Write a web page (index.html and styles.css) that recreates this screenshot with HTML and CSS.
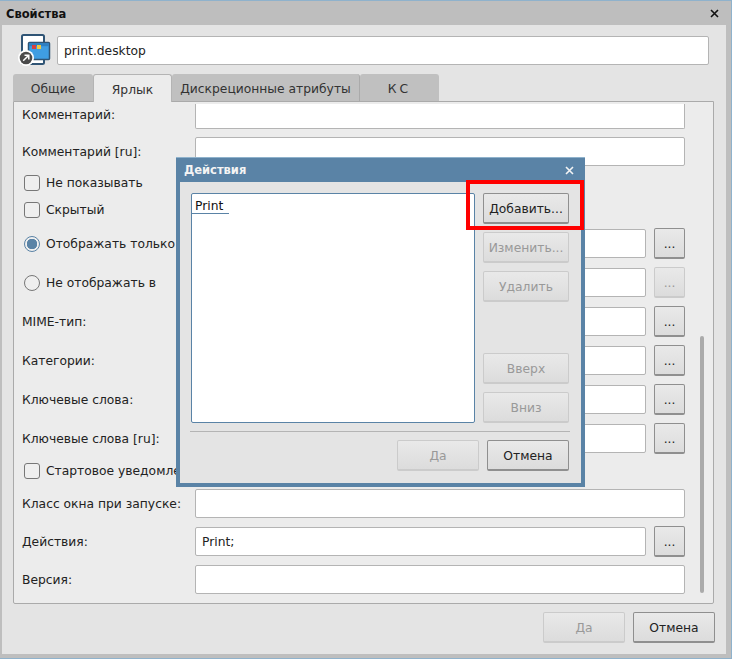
FILE: index.html
```html
<!DOCTYPE html>
<html lang="ru">
<head>
<meta charset="utf-8">
<title>Свойства</title>
<link rel="stylesheet" href="styles.css">
</head>
<body>
<div class="window">
  <header class="titlebar">
    <span class="title">Свойства</span>
    <svg class="close" width="9" height="9" viewBox="0 0 9 9"><path d="M1 1l7 7M8 1L1 8" stroke="currentColor" stroke-width="1.6" fill="none"/></svg>
  </header>
  <div class="client">
    <div class="name-row">
      <svg class="file-icon" width="33" height="33" viewBox="0 0 33 33">
        <rect x="4" y="1" width="22" height="29" rx="1.500" fill="#fff" stroke="#2f5475" stroke-width="2"/>
        <rect x="10.500" y="8.500" width="21" height="17" rx="1" fill="#3f9de2" stroke="#2f5475" stroke-width="1.500"/>
        <rect x="11.200" y="9.200" width="19.600" height="3" fill="#2f7fc0"/>
        <rect x="14" y="11" width="4" height="4" fill="#d8413f"/>
        <rect x="19" y="11" width="4" height="4" fill="#f3c83a"/>
        <circle cx="8" cy="24" r="8" fill="#fff"/>
        <circle cx="8" cy="24" r="6.300" fill="#4a4a4a"/>
        <path d="M5.200 26.800L10.500 21.500M6.500 21.200H10.800V25.500" stroke="#fff" stroke-width="1.500" fill="none"/>
      </svg>
      <div class="input name-input">print.desktop</div>
    </div>
    <nav class="tabs">
      <span class="tab tab-first">Общие</span>
      <span class="tab tab-active">Ярлык</span>
      <span class="tab tab-wide">Дискреционные атрибуты</span>
      <span class="tab tab-last">КС</span>
    </nav>
    <section class="panel">
      <div class="form">
        <div class="row row-first"><label class="label">Комментарий:</label><div class="input input-clipped"></div></div>
        <div class="row row-input"><label class="label">Комментарий [ru]:</label><div class="input"></div></div>
        <div class="row row-check"><span class="checkbox"></span><span class="opt">Не показывать</span></div>
        <div class="row row-check row-loose"><span class="checkbox"></span><span class="opt">Скрытый</span></div>
        <div class="row row-btn row-loose"><span class="radio radio-on"></span><span class="opt opt-field">Отображать только</span><div class="input"></div><button class="btn btn-dots">...</button></div>
        <div class="row row-btn"><span class="radio"></span><span class="opt opt-field">Не отображать в</span><div class="input"></div><button class="btn btn-dots btn-off">...</button></div>
        <div class="row row-btn"><label class="label">MIME-тип:</label><div class="input"></div><button class="btn btn-dots">...</button></div>
        <div class="row row-btn"><label class="label">Категории:</label><div class="input"></div><button class="btn btn-dots">...</button></div>
        <div class="row row-btn"><label class="label">Ключевые слова:</label><div class="input"></div><button class="btn btn-dots">...</button></div>
        <div class="row row-btn"><label class="label">Ключевые слова [ru]:</label><div class="input"></div><button class="btn btn-dots">...</button></div>
        <div class="row row-check"><span class="checkbox"></span><span class="opt">Стартовое уведомление</span></div>
        <div class="row row-input row-loose"><label class="label">Класс окна при запуске:</label><div class="input"></div></div>
        <div class="row row-btn"><label class="label">Действия:</label><div class="input">Print;</div><button class="btn btn-dots">...</button></div>
        <div class="row row-input"><label class="label">Версия:</label><div class="input"></div></div>
      </div>
      <div class="scrollbar"></div>
    </section>
    <footer class="actions">
      <button class="btn btn-main btn-off">Да</button>
      <button class="btn btn-main">Отмена</button>
    </footer>
  </div>

  <div class="dialog">
    <header class="dialog-title">
      <span class="title">Действия</span>
      <svg class="close" width="9" height="9" viewBox="0 0 9 9"><path d="M1 1l7 7M8 1L1 8" stroke="currentColor" stroke-width="1.600" fill="none"/></svg>
    </header>
    <div class="dialog-client">
      <div class="dialog-main">
        <div class="list"><span class="list-item">Print</span></div>
        <div class="side">
          <button class="btn btn-side">Добавить...</button>
          <button class="btn btn-side btn-off">Изменить...</button>
          <button class="btn btn-side btn-off">Удалить</button>
          <span class="side-spacer"></span>
          <button class="btn btn-side btn-off">Вверх</button>
          <button class="btn btn-side btn-off">Вниз</button>
        </div>
      </div>
      <div class="dialog-actions">
        <button class="btn btn-main btn-off">Да</button>
        <button class="btn btn-main">Отмена</button>
      </div>
    </div>
  </div>
  <div class="highlight"></div>
</div>
</body>
</html>
```
FILE: styles.css
```css
* { box-sizing: border-box; }
html, body { margin: 0; padding: 0; }
body {
  width: 732px;
  height: 659px;
  overflow: hidden;
  font-family: "DejaVu Sans", sans-serif;
  font-size: 12.3px;
  color: #222;
}
.window {
  position: relative;
  width: 732px;
  height: 659px;
  background: #bebebe;
  border-top: 1px solid #8fb2cc;
  border-right: 1px solid #8fb2cc;
  border-bottom: 1px solid #8fb2cc;
  display: flex;
  flex-direction: column;
}
.titlebar {
  height: 24px;
  flex: none;
  display: flex;
  align-items: center;
  justify-content: space-between;
  padding: 0 12px 0 6px;
  color: #111;
}
.titlebar .title { margin-top: 2px; }
.title {
  font-family: "DejaVu Sans", sans-serif;
  font-weight: 700;
  font-size: 11.5px;
}
.client {
  flex: 1;
  margin: 0 5px 4px 2px;
  background: #e4e4e4;
  padding: 11px 11px 0 11px;
  display: flex;
  flex-direction: column;
}
.name-row {
  display: flex;
  align-items: center;
  height: 29px;
  padding-left: 5px;
  padding-right: 6px;
}
.file-icon { flex: none; margin: 0 6px 0 0; }
.name-input { flex: 1; height: 29px; padding-left: 7px; }
.input {
  flex: 1;
  min-width: 0;
  height: 29px;
  background: #fff;
  border: 1px solid #b4b4b4;
  border-radius: 2px;
  padding: 0 6px;
  display: flex;
  align-items: center;
  color: #222;
}
.tabs {
  display: flex;
  align-items: flex-end;
  height: 28px;
  margin-top: 8px;
}
.tab {
  height: 27px;
  padding-top: 2px;
  background: #c0c0c0;
  border-radius: 3px 3px 0 0;
  display: flex;
  align-items: center;
  justify-content: center;
  color: #333;
}
.tab-first { width: 80px; }
.tab-active {
  width: 79px;
  height: 28px;
  margin-bottom: -1px;
  position: relative;
  z-index: 1;
  background: #ececec;
  border: 1px solid #b4b4b4;
  border-bottom: 0;
}
.tab-wide { width: 188px; border-right: 1px solid #aaa; }
.tab-last { width: 79px; letter-spacing: 3px; }
.panel {
  width: 701px;
  height: 503px;
  flex: none;
  background: #ececec;
  border: 1px solid #aaa;
  border-radius: 0 0 2px 2px;
  display: flex;
  padding: 2px 0 0 8px;
}
.form {
  width: 663px;
  display: flex;
  flex-direction: column;
  gap: 8px;
}
.row { display: flex; align-items: center; }
.row-first { height: 25px; }
.row-first .label { margin-bottom: 3px; }
.row-input { height: 29px; }
.row-btn { height: 31px; }
.row-check { height: 18px; padding-left: 2px; }
.row-loose { margin-top: 1px; }
.input-clipped { height: 25px; border-top: 0; border-radius: 0 0 2px 2px; }
.label { width: 173px; flex: none; }
.row-btn .radio + .opt-field { width: 149px; }
.opt { margin-left: 6px; white-space: nowrap; }
.opt-field { flex: none; }
.checkbox {
  width: 16px;
  height: 16px;
  flex: none;
  border: 1px solid #777;
  border-radius: 3px;
  background: #efefef;
}
.radio {
  width: 16px;
  height: 16px;
  flex: none;
  margin-left: 2px;
  border: 1px solid #777;
  border-radius: 50%;
  background: #efefef;
}
.radio-on {
  border-color: #5a83a6;
  background: radial-gradient(circle, #5a83a6 0 5px, #efefef 5.5px);
}
.btn {
  font-family: inherit;
  font-size: 12.3px;
  color: #222;
  padding: 2px 0 0;
  background: linear-gradient(#e9e9e9, #dcdcdc);
  border: 1px solid #8f8f8f;
  border-bottom-width: 2px;
  border-radius: 2px;
  flex: none;
}
.btn-off { color: #999; border-color: #cbcbcb; }
.btn-dots { width: 31px; height: 31px; margin-left: 8px; }
.btn-main { width: 82px; height: 31px; }
.btn-side { width: 86px; height: 31px; }
.scrollbar {
  width: 4px;
  height: 257px;
  margin: 232px 0 0 15px;
  background: #aaa;
  border-radius: 2px;
}
.actions {
  display: flex;
  justify-content: flex-end;
  gap: 8px;
  margin-top: 8px;
}
.dialog {
  position: absolute;
  left: 176px;
  top: 156px;
  width: 409px;
  height: 330px;
  background: #5a83a6;
  border-top: 1px solid #8fb2cc;
  display: flex;
  flex-direction: column;
}
.dialog-title {
  height: 24px;
  flex: none;
  display: flex;
  align-items: center;
  justify-content: space-between;
  padding: 0 11px 0 8px;
  color: #f4f4f4;
}
.dialog-client {
  flex: 1;
  margin: 0 4px 4px;
  background: #e4e4e4;
  padding: 11px 11px 0;
  display: flex;
  flex-direction: column;
}
.dialog-main { display: flex; gap: 8px; height: 230px; }
.list {
  width: 284px;
  background: #fff;
  border: 1px solid #5a83a6;
  border-radius: 2px;
  color: #111;
}
.list-item {
  display: block;
  width: 37px;
  height: 20px;
  padding-left: 3px;
  line-height: 24px;
  border-bottom: 1px solid #5a83a6;
}
.side { display: flex; flex-direction: column; gap: 8px; }
.side-spacer { height: 35px; flex: none; }
.dialog-actions {
  margin-top: 8px;
  padding-top: 8px;
  padding-right: 1px;
  border-top: 1px solid #b4b4b4;
  display: flex;
  justify-content: flex-end;
  gap: 8px;
  width: 380px;
  margin-left: -1px;
}
.highlight {
  position: absolute;
  left: 466px;
  top: 179px;
  width: 118px;
  height: 50px;
  border: 4px solid #f00;
}
```
